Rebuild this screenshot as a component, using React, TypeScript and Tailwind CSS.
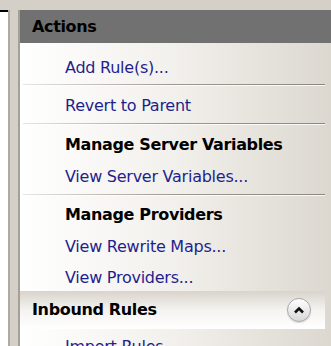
const font = { fontFamily: '"DejaVu Sans", Verdana, sans-serif' };

function Link({ children, h = "h-[32px]" }: { children: React.ReactNode; h?: string }) {
  return (
    <div className={`${h} flex items-center pl-[45px] text-[16px] text-[#1f1f8c] tracking-[-0.25px]`}>
      {children}
    </div>
  );
}

function Title({ children }: { children: React.ReactNode }) {
  return (
    <div className="h-[32px] flex items-center pl-[45px] text-[16px] font-bold text-black tracking-[-0.35px]">
      {children}
    </div>
  );
}

function Sep() {
  return (
    <div className="ml-[3px] mr-[6px]">
      <div className="h-px bg-gradient-to-r from-[#e8e6e2] via-[#9c9890] to-[#8c8880]" />
      <div className="h-px bg-white/80" />
    </div>
  );
}

export default function App() {
  return (
    <div
      className="w-[331px] h-[346px] overflow-hidden bg-[#d4d0c8] pt-[10px] flex"
      style={font}
    >
      {/* left frame edge */}
      <div className="flex shrink-0">
        <div className="w-[8px] bg-white border-t-2 border-black" />
        <div className="w-[2px] bg-[#aeaaa2]" />
        <div className="w-[8px] bg-[#d4d0c8]" />
        <div className="w-[2px] bg-[#a4a098]" />
      </div>

      {/* actions pane */}
      <div className="flex-1 flex flex-col bg-gradient-to-r from-white via-[#f2f0ec] to-[#dcd8d0]">
        <div className="h-[33px] shrink-0 bg-[#727172] flex items-center pl-[12px] text-[16px] font-bold text-black tracking-[-0.35px]">
          Actions
        </div>

        <div className="pt-[9px]">
          <Link>Add Rule(s)...</Link>
        </div>
        <Sep />
        <div className="pt-[4px] pb-px">
          <Link>Revert to Parent</Link>
        </div>
        <Sep />
        <div className="pt-[4px] pb-px">
          <Title>Manage Server Variables</Title>
          <Link>View Server Variables...</Link>
        </div>
        <Sep />
        <div className="pt-[3px]">
          <Title>Manage Providers</Title>
          <Link h="h-[31px]">View Rewrite Maps...</Link>
          <Link h="h-[31px]">View Providers...</Link>
        </div>

        <div className="mt-[-2px] mr-[6px] h-[38px] shrink-0 bg-gradient-to-b from-[#d8d4cc] via-[#f4f3f0] to-white flex items-center justify-between pl-[12px] pr-[14px]">
          <span className="text-[16px] font-bold text-black tracking-[-0.35px]">Inbound Rules</span>
          <div className="w-[24px] h-[24px] rounded-full border border-[#a8a8a8] bg-gradient-to-b from-white to-[#d8d8d8] flex items-center justify-center shadow-[0_1px_1px_rgba(0,0,0,0.15)]">
            <svg width="12" height="8" viewBox="0 0 12 8">
              <path d="M2 6.5 L6 2.5 L10 6.5" fill="none" stroke="#111" strokeWidth="2.6" />
            </svg>
          </div>
        </div>

        <div className="pt-[2px]">
          <Link>Import Rules...</Link>
        </div>
      </div>
    </div>
  );
}
